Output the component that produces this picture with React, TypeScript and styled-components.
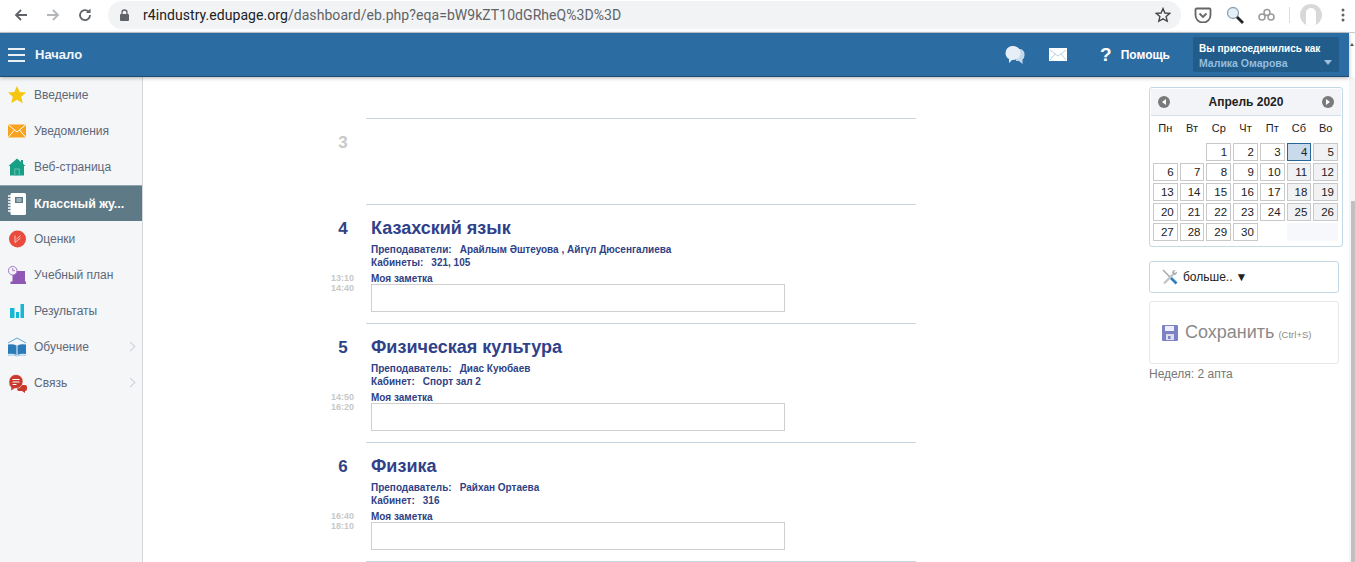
import React from "react";
import styled, { createGlobalStyle } from "styled-components";

const Global = createGlobalStyle`
  html, body { margin: 0; padding: 0; height: 100%; overflow: hidden; background: #fff; }
  body { font-family: "Liberation Sans", Arial, sans-serif; }
`;

const Page = styled.div`width: 1355px; height: 562px; display: flex; flex-direction: column; overflow: hidden;`;
const Chrome = styled.div`height: 33px; flex: none; box-sizing: border-box; display: flex; align-items: center; gap: 16px; padding: 0 0 2px 13px; background: #fff; border-bottom: 1px solid #c9ccd0;`;
const NavIcon = styled.span`width: 16px; height: 16px; display: flex; align-items: center; justify-content: center; flex: none;`;
const Omnibox = styled.div`margin-left: -1px; width: 1073px; height: 28px; border-radius: 14px; background: #f1f3f4; display: flex; align-items: center; padding: 0 10px 0 11px; box-sizing: border-box; font: 14px "Roboto", "Liberation Sans", sans-serif; letter-spacing: .06px; color: #5f6368; flex: none;`;
const Host = styled.span`color: #202124;`;
const Url = styled.span`margin-left: 13px; flex: 1;`;
const Tools = styled.div`display: flex; align-items: center; margin-left: -3px; gap: 14px;`;
const Divider = styled.span`width: 1px; height: 16px; background: #dadce0;`;
const Avatar = styled.span`width: 22px; height: 22px; margin: 0 5px 0 -4px; border-radius: 50%; background: #d7d9d9; display: flex; justify-content: center; align-items: flex-end; overflow: hidden;`;
const AvatarHead = styled.span`width: 10px; height: 18px; border-radius: 5px 5px 2px 2px; background: #fff;`;

const Bar = styled.header`height: 43px; flex: none; background: #2b6ca3; border-bottom: 1px solid #1c4a70; box-shadow: 0 1px 4px rgba(0,0,0,.3); display: flex; align-items: center; color: #fff; position: relative; z-index: 2; margin-right: 6px;`;
const ScrollUp = styled.span`position: absolute; right: -5px; top: 10px; border: 2px solid transparent; border-bottom: 3px solid #555; border-top: 0;`;
const Burger = styled.span`width: 17px; margin-left: 8px; display: flex; flex-direction: column; gap: 4px; span { height: 2px; background: #e9f0f6; }`;
const BarTitle = styled.span`margin-left: 10px; font-size: 13px; font-weight: 700; color: #f0f5f9;`;
const BarRight = styled.div`margin-left: auto; display: flex; align-items: center;`;
const Spacer = styled.span`width: 24px;`;
const HelpMark = styled.span`font-size: 19px; font-weight: 700; margin-left: 33px;`;
const HelpText = styled.span`font-size: 12px; font-weight: 700; margin-left: 9px;`;
const UserBox = styled.div`margin-left: 23px; margin-right: 10px; width: 146px; height: 35px; background: #215c8b; border-radius: 2px; box-sizing: border-box; padding: 5px 6px; position: relative; line-height: 14px;`;
const UserLabel = styled.div`font-weight: 700; font-size: 10px; color: #fff;`;
const UserName = styled.div`color: #94bcde; font-weight: 700; font-size: 10.5px;`;
const Caret = styled.span`position: absolute; right: 7px; bottom: 7px; border: 4px solid transparent; border-top: 5px solid #9ebfdb; border-bottom: 0;`;

const Body = styled.div`flex: 1; display: flex; min-height: 0;`;
const Side = styled.nav`width: 143px; flex: none; background: #f5f6f8; border-right: 1px solid #d4d8dc; box-sizing: border-box;`;
const Item = styled.div<{ $active?: boolean }>`height: 36px; display: flex; align-items: center; padding-left: 7px; position: relative; box-sizing: border-box;
  font-size: ${p => (p.$active ? "12.4px" : "12px")};
  color: ${p => (p.$active ? "#fff" : "#5d6878")}; background: ${p => (p.$active ? "#5f7a87" : "transparent")}; font-weight: ${p => (p.$active ? 700 : 400)};
  border-top: ${p => (p.$active ? "1px solid #90a4ae" : "0")};`;
const ItemIcon = styled.span`width: 20px; height: 20px; display: flex; align-items: center; justify-content: center; margin-right: 7px; flex: none; svg { overflow: visible; }`;
const Chevron = styled.span`position: absolute; right: 8px; top: 14px; width: 6px; height: 6px; border-top: 1px solid #ccd0d4; border-right: 1px solid #ccd0d4; transform: rotate(45deg);`;

const Main = styled.main`flex: 1; display: flex; min-width: 0; position: relative;`;
const Lessons = styled.div`width: 584px; margin-left: 189px; padding-top: 41px; flex: none;`;
const Lesson = styled.section<{ $h: number }>`height: ${p => p.$h}px; box-sizing: border-box; border-top: 1px solid #c6d7e3; margin-left: 34px; width: 550px; position: relative; padding-left: 5px;`;
const Num = styled.div<{ $faded?: boolean }>`position: absolute; left: -34px; width: 22px; text-align: center; top: 14px; font-size: 17px; font-weight: 700; color: ${p => (p.$faded ? "#c9c9c9" : "#2f4285")};`;
const Times = styled.div`position: absolute; left: -40px; width: 28px; top: 68px; font-size: 9px; line-height: 10px; font-weight: 700; color: #c8c8c8; text-align: right;`;
const Subject = styled.h2`margin: 0 0 4px; padding-top: 13px; font-size: 18px; line-height: 21px; font-weight: 700; color: #30418a;`;
const Meta = styled.div`font-size: 10px; line-height: 13px; font-weight: 700; color: #2f4285;`;
const Gap = styled.span`margin-left: 8px;`;
const NoteLabel = styled.div`font-size: 10px; line-height: 10px; margin-top: 5px; font-weight: 700; color: #2f4285;`;
const Note = styled.div`width: 414px; height: 28px; border: 1px solid #cfcfcf; box-sizing: border-box; background: #fff;`;

const Right = styled.aside`position: absolute; left: 1006px; top: 10px; width: 194px; display: flex; flex-direction: column;`;
const Cal = styled.div`border: 1px solid #c5d8e6; border-radius: 3px; width: 194px; box-sizing: border-box; background: #fff; padding-bottom: 5px;`;
const CalHead = styled.div`height: 26px; background: #f2f4f7; border-bottom: 1px solid #d3dfe8; margin: 1px 1px 0; display: flex; align-items: center; justify-content: space-between; padding: 0 7px; font-size: 12px; font-weight: 700; color: #222;`;
const Round = styled.span`width: 12px; height: 12px; border-radius: 50%; background: #7a7a7a; display: flex; align-items: center; justify-content: center;`;
const Tri = styled.span<{ $left?: boolean }>`border: 3px solid transparent; ${p => (p.$left ? "border-right: 4px solid #fff; border-left: 0;" : "border-left: 4px solid #fff; border-right: 0;")}`;
const Grid = styled.div`display: grid; grid-template-columns: repeat(7, 1fr); column-gap: 2px; row-gap: 2px; padding: 0 4px 0 3px;`;
const Dow = styled.div`height: 25px; line-height: 25px; text-align: center; font-size: 11px; color: #222;`;
const Day = styled.div<{ $kind?: "we" | "today" | "empty" | "blank" }>`height: 18px; line-height: 16px; box-sizing: border-box; text-align: right; padding-right: 3px; font-size: 11.500px; color: #222;
  grid-column: ${p => (p.$kind === "empty" ? "span 2" : "auto")};
  border: 1px solid ${p => (p.$kind === "today" ? "#26679b" : p.$kind === "blank" || p.$kind === "empty" ? "transparent" : "#c9c9c9")};
  background: ${p => (p.$kind === "today" ? "#c9daea" : p.$kind === "we" ? "#f1f2f4" : p.$kind === "empty" ? "#f6f8fb" : p.$kind === "blank" ? "transparent" : "#fff")};`;
const More = styled.div`margin-top: 14px; width: 190px; height: 32px; box-sizing: border-box; border: 1px solid #c5d8e6; border-radius: 3px; display: flex; align-items: center; padding-left: 12px; font-size: 12px; color: #222; gap: 5px;`;
const Arrow = styled.span`font-size: 12px; margin-left: -2px;`;
const Save = styled.div`margin-top: 8px; width: 190px; height: 63px; box-sizing: border-box; border: 1px solid #e3e8ec; border-radius: 3px; display: flex; align-items: center; padding-left: 12px; color: #8a8a8a; font-size: 18px;`;
const SaveLabel = styled.span`margin-left: 7px;`;
const Shortcut = styled.span`font-size: 9.500px; margin-left: 4px; margin-top: 4px;`;
const Week = styled.div`margin-top: 3px; line-height: 14px; font-size: 12px; color: #777;`;
const Scroll = styled.div`position: absolute; right: 0; top: 124px; bottom: 0; width: 4px; background: #c0c0c0;`;
const Gutter = styled.div`position: absolute; right: 0; top: 0; bottom: 0; width: 6px; background: #f5f5f5;`;

const icons: Record<string, React.ReactNode> = {
  star: <path d="M10 1l2.700 6 6.300.6-4.800 4.200 1.500 6.400L10 14.800l-5.700 3.400 1.500-6.400L1 7.600 7.300 7z" fill="#f5c60f" />,
  mail: <g><rect x="1" y="3.500" width="18" height="13" fill="#f8a21d" /><path d="M1 3.500l9 7.500 9-7.500M1 16.500l6.500-7.500M19 16.500L12.500 9" stroke="#fff" strokeWidth="1" fill="none" /></g>,
  home: <g><path d="M10 1.500L1.500 9H3v9.500h14V9h1.500L16 6.800V3h-2v2z" fill="#17a085" /><rect x="7.800" y="12" width="4.400" height="6.500" fill="#17a085" stroke="#7cc9b8" strokeWidth=".8" /></g>,
  book: <g><rect x="3.500" y="-1" width="15.500" height="22" rx="1.500" fill="#fff" /><rect x="8" y="3" width="8" height="6" fill="#5f7a87" /><path d="M9.500 5h5M9.500 7h5" stroke="#fff" strokeWidth=".8" /><path d="M1 2h4M1 5h4M1 8h4M1 11h4M1 14h4M1 17h4" stroke="#fff" strokeWidth="1.300" /></g>,
  grade: <g><circle cx="10.500" cy="10" r="8.500" fill="#e94b3c" /><path d="M8 6.500v7l5.500-4.500M9.500 10l4-3.500" stroke="#f9c8c2" strokeWidth="1" fill="none" /></g>,
  plan: <g><rect x="5.500" y="6" width="12.500" height="11" fill="#8f58b5" /><rect x="3.500" y="16.500" width="15.500" height="2.500" fill="#8f58b5" /><circle cx="5.700" cy="5.700" r="4.300" fill="#f5f6f8" stroke="#a878c8" /><path d="M5.700 3v2.700h2.300" stroke="#a878c8" fill="none" /></g>,
  chart: <g fill="#14b8d4"><rect x="3" y="7" width="4.500" height="10" /><rect x="9" y="11" width="3" height="6" /><rect x="13.500" y="3" width="3.500" height="14" /></g>,
  learn: <g><path d="M1 6L10 1l9 5" fill="none" stroke="#5fa8d8" strokeWidth="1" /><path d="M1 7.500q5-1 8.500 1V18Q6 16 1 17zM19 7.500q-5-1-8.500 1V18q3.500-2 8.500-1z" fill="#2b7bb9" /><path d="M1 18.300q5-1 9 .7 4-1.700 9-.7" fill="none" stroke="#7fbbe3" strokeWidth=".8" /></g>,
  talk: <g><path d="M12 12h6a2 2 0 012 2v2a2 2 0 01-2 2v2l-3-2h-3a2 2 0 01-2-2v-2a2 2 0 012-2z" fill="#c9392c" /><path d="M9 1.500a7 7 0 017 7 7 7 0 01-7 7H7.500L4 18v-3.500A7 7 0 012 8.500a7 7 0 017-7z" fill="#c9392c" stroke="#f5f6f8" strokeWidth=".6" /><path d="M5.500 6.500h7M5.500 9h7M5.500 11.500h4" stroke="#fff" strokeWidth="1" /></g>,
};

const items = [
  ["star", "Введение"], ["mail", "Уведомления"], ["home", "Веб-страница"], ["book", "Классный жу..."],
  ["grade", "Оценки"], ["plan", "Учебный план"], ["chart", "Результаты"], ["learn", "Обучение"], ["talk", "Связь"],
];

const lessons = [
  { n: "4", s: "Казахский язык", tl: "Преподаватели:", t: "Арайлым Әштеуова , Айгүл Дюсенгалиева", rl: "Кабинеты:", r: "321, 105", a: "13:10", b: "14:40" },
  { n: "5", s: "Физическая культура", tl: "Преподаватель:", t: "Диас Куюбаев", rl: "Кабинет:", r: "Спорт зал 2", a: "14:50", b: "16:20" },
  { n: "6", s: "Физика", tl: "Преподаватель:", t: "Райхан Ортаева", rl: "Кабинет:", r: "316", a: "16:40", b: "18:10" },
];

const days: [string, "we" | "today" | "empty" | "blank" | undefined][] = [
  ["", "blank"], ["", "blank"], ["1", undefined], ["2", undefined], ["3", undefined], ["4", "today"], ["5", "we"],
  ["6", undefined], ["7", undefined], ["8", undefined], ["9", undefined], ["10", undefined], ["11", "we"], ["12", "we"],
  ["13", undefined], ["14", undefined], ["15", undefined], ["16", undefined], ["17", undefined], ["18", "we"], ["19", "we"],
  ["20", undefined], ["21", undefined], ["22", undefined], ["23", undefined], ["24", undefined], ["25", "we"], ["26", "we"],
  ["27", undefined], ["28", undefined], ["29", undefined], ["30", undefined], ["", "blank"], ["", "empty"],
];

export default function App() {
  return (
    <Page>
      <Global />
      <Chrome>
        <NavIcon><svg width="16" height="16" viewBox="0 0 16 16"><path d="M14 8H3M8 3L3 8l5 5" stroke="#5f6368" strokeWidth="1.800" fill="none" /></svg></NavIcon>
        <NavIcon><svg width="16" height="16" viewBox="0 0 16 16"><path d="M2 8h11M8 3l5 5-5 5" stroke="#b4b7ba" strokeWidth="1.800" fill="none" /></svg></NavIcon>
        <NavIcon><svg width="16" height="16" viewBox="0 0 16 16"><path d="M13 8a5 5 0 11-1.500-3.500" stroke="#5f6368" strokeWidth="1.800" fill="none" /><path d="M13.500 1.500v4.500H9z" fill="#5f6368" /></svg></NavIcon>
        <Omnibox>
          <svg width="11" height="13" viewBox="0 0 11 13"><rect x="1" y="5" width="9" height="7" rx="1" fill="#5f6368" /><path d="M3 5V3.500a2.500 2.500 0 015 0V5" stroke="#5f6368" strokeWidth="1.300" fill="none" /></svg>
          <Url><Host>r4industry.edupage.org</Host>/dashboard/eb.php?eqa=bW9kZT10dGRheQ%3D%3D</Url>
          <svg width="16" height="16" viewBox="0 0 20 20"><path d="M10 2l2.400 5.500 6 .5-4.500 4 1.400 5.800L10 14.800l-5.300 3 1.400-5.800-4.500-4 6-.5z" fill="none" stroke="#444" strokeWidth="1.700" /></svg>
        </Omnibox>
        <Tools>
          <svg width="18" height="16" viewBox="0 0 18 16"><path d="M2.500 1.500h13a1 1 0 011 1V8a7.500 7.500 0 01-15 0V2.500a1 1 0 011-1z" fill="none" stroke="#666" strokeWidth="1.800" /><path d="M5.500 6.500L9 10l3.500-3.500" fill="none" stroke="#666" strokeWidth="1.800" /></svg>
          <svg width="18" height="18" viewBox="0 0 18 18"><circle cx="7" cy="7" r="5.500" fill="#e3f0f8" stroke="#8fa3b3" strokeWidth="1.300" /><path d="M11 11l6 6" stroke="#222" strokeWidth="2.800" /></svg>
          <svg width="17" height="14" viewBox="0 0 17 14"><g fill="none" stroke="#9a9a9a" strokeWidth="1.500"><circle cx="4" cy="9" r="3" /><circle cx="9" cy="4.500" r="3" /><circle cx="13" cy="9" r="3" /></g></svg>
          <Divider />
          <Avatar><AvatarHead /></Avatar>
          <svg width="4" height="14" viewBox="0 0 4 14"><g fill="#5f6368"><circle cx="2" cy="2" r="1.500" /><circle cx="2" cy="7" r="1.500" /><circle cx="2" cy="12" r="1.500" /></g></svg>
        </Tools>
      </Chrome>
      <Bar>
        <Burger><span /><span /><span /></Burger>
        <BarTitle>Начало</BarTitle>
        <BarRight>
          <svg width="20" height="18" viewBox="0 0 20 18"><path d="M13 3h1.500a5 5 0 015 5v1.500a5 5 0 01-2 4V18l-3.500-3h-3z" fill="#c3d8e9" /><path d="M7.500 0h1a7 7 0 017 7v0a7 7 0 01-7 7H7l-3 3v-4A7 7 0 01.500 7v0a7 7 0 017-7z" fill="#e6eff7" /></svg>
          <Spacer />
          <svg width="18" height="13" viewBox="0 0 18 13"><rect width="18" height="13" fill="#fff" /><path d="M1 2l8 6 8-6M1 12l5-6M17 12l-5-6" stroke="#a9c4da" strokeWidth=".8" fill="none" /></svg>
          <HelpMark>?</HelpMark>
          <HelpText>Помощь</HelpText>
          <UserBox>
            <UserLabel>Вы присоединились как</UserLabel>
            <UserName>Малика Омарова</UserName>
            <Caret />
          </UserBox>
        </BarRight>
        <ScrollUp />
      </Bar>
      <Body>
        <Side>
          {items.map(([k, label], i) => (
            <Item key={k} $active={i === 3}>
              <ItemIcon><svg width="20" height="20" viewBox="0 0 20 20">{icons[k]}</svg></ItemIcon>
              {label}
              {i > 6 && <Chevron />}
            </Item>
          ))}
        </Side>
        <Main>
          <Lessons>
            <Lesson $h={86}><Num $faded>3</Num></Lesson>
            {lessons.map(l => (
              <Lesson $h={119} key={l.n}>
                <Num>{l.n}</Num>
                <Times>{l.a}<br />{l.b}</Times>
                <Subject>{l.s}</Subject>
                <Meta>{l.tl}<Gap>{l.t}</Gap></Meta>
                <Meta>{l.rl}<Gap>{l.r}</Gap></Meta>
                <NoteLabel>Моя заметка</NoteLabel>
                <Note />
              </Lesson>
            ))}
            <Lesson $h={10} />
          </Lessons>
          <Right>
            <Cal>
              <CalHead>
                <Round><Tri $left /></Round>
                Апрель 2020
                <Round><Tri /></Round>
              </CalHead>
              <Grid>
                {["Пн", "Вт", "Ср", "Чт", "Пт", "Сб", "Во"].map(d => <Dow key={d}>{d}</Dow>)}
                {days.map(([d, k], i) => <Day key={i} $kind={k}>{d}</Day>)}
              </Grid>
            </Cal>
            <More>
              <svg width="16" height="16" viewBox="0 0 16 16"><path d="M1 1l7 7" stroke="#9aa0a6" strokeWidth="1.200" /><path d="M7.500 7.500l7 7" stroke="#2a7fc0" strokeWidth="2.600" /><path d="M2 14.500L11 5.500" stroke="#c2c6ca" strokeWidth="2.400" /><path d="M10 3.500a3 3 0 013.500-2.500L12 3l1 1 2-1.500A3 3 0 0111.500 6z" fill="#a9aeb3" /></svg>
              больше.. <Arrow>▼</Arrow>
            </More>
            <Save>
              <svg width="16" height="16" viewBox="0 0 16 16"><rect width="16" height="16" rx="1" fill="#7b83c4" /><rect x="3" y="1" width="9" height="5" fill="#eef" /><rect x="4" y="9" width="8" height="6" fill="#dde" /><rect x="6" y="11" width="2.500" height="3" fill="#7b83c4" /></svg>
              <SaveLabel>Сохранить</SaveLabel>
              <Shortcut>(Ctrl+S)</Shortcut>
            </Save>
            <Week>Неделя: 2 апта</Week>
          </Right>
          <Gutter />
          <Scroll />
        </Main>
      </Body>
    </Page>
  );
}
